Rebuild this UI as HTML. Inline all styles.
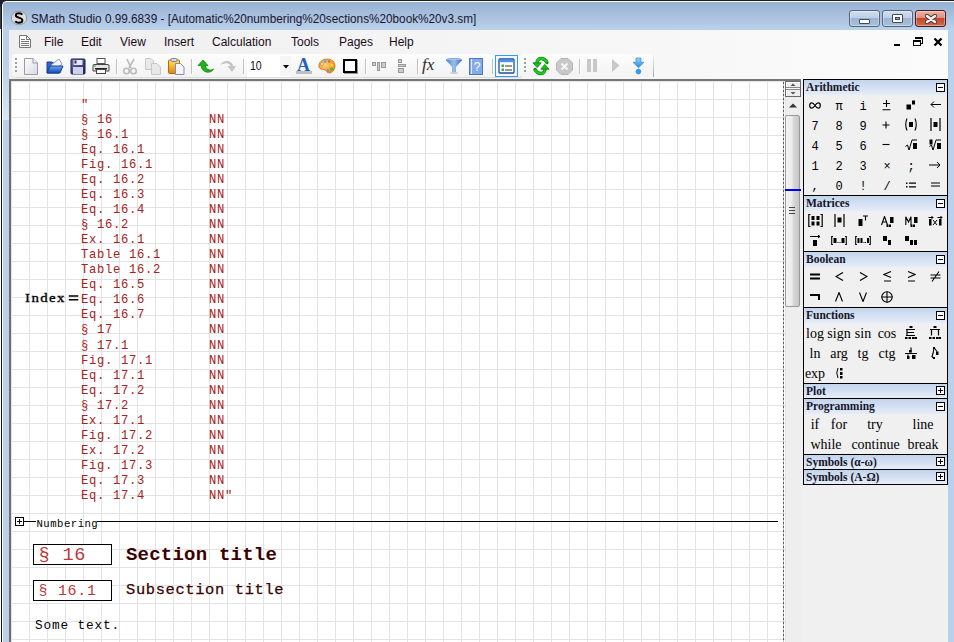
<!DOCTYPE html>
<html><head><meta charset="utf-8">
<style>
*{box-sizing:border-box;margin:0;padding:0}
html,body{width:954px;height:642px;overflow:hidden;background:#fff;position:relative;font-family:"Liberation Sans",sans-serif}
.a{position:absolute}
#desk0{left:0;top:0;width:954px;height:1px;background:#1b1b1b}
#desk1{left:0;top:0;width:1px;height:29px;background:#3b3c62}
#desk2{left:1px;top:0;width:1px;height:642px;background:#111}
#frame{left:2px;top:1px;width:952px;height:641px;background:#b9d1ea;border-top-left-radius:5px;border-top:1px solid #fff;border-left:1px solid #fff}
#title{left:3px;top:2px;width:951px;height:28px;background:linear-gradient(#97b1d3,#bbd2eb);border-top-left-radius:4px}
#ttext{left:31px;top:11.5px;font-size:12.7px;color:#1a1430;white-space:nowrap;transform-origin:0 0;transform:scaleX(0.927)}
#menubar{left:9px;top:30px;width:939px;height:50px;background:linear-gradient(90deg,#efefef,#fbfbfb)}
.cb{top:10px;width:31px;height:17px;border:1px solid #55657d;border-radius:3px;background:linear-gradient(#d0def0 0,#bccfe8 45%,#9db5d3 50%,#a9c0dc 100%);box-shadow:inset 0 0 0 1px rgba(255,255,255,.35)}
#close{border-color:#4a1620;background:linear-gradient(#eab3a5 0,#e0917c 45%,#c5462c 50%,#d2694e 100%)}
.tbar{top:54px;height:23px;border-radius:3px;background:linear-gradient(#fdfdfd,#f3f3f3);box-shadow:1px 1px 0 #dcdcdc}
.grip{top:58px;width:2px;height:14px;background:repeating-linear-gradient(#a0a0a0 0 2px,transparent 2px 4px)}
.tsep{top:59px;width:1px;height:15px;background:#c0c0c0;box-shadow:1px 0 0 #fff}
.menu{top:35px;font-size:12px;color:#1a0a1a;white-space:nowrap}
#ws{left:9px;top:79px;width:776px;height:563px;border-left:2px solid #6f6f6f;border-top:2px solid #777;
 background-color:#fff;
 background-image:linear-gradient(90deg,#e3e3e3 1px,transparent 1px),linear-gradient(#e3e3e3 1px,transparent 1px);
 background-size:18px 18px;background-position:18px 18px}
#wsline{left:9px;top:79px;width:793px;height:2px;background:#777}
#dash{left:783px;top:81px;width:1px;height:561px;background:repeating-linear-gradient(#c4c4c4 0 1px,#5e5e5e 1px 3px,#c4c4c4 3px 4px)}
#sb{left:785px;top:81px;width:17px;height:561px;background:#eeeeee;border-left:1px solid #e3e3e3;border-right:1px solid #e3e3e3;box-shadow:1px 0 0 #fff}
#panelbg{left:801px;top:79px;width:147px;height:563px;background:#f0f0f0}
#panel{left:803px;top:79px;width:145px;height:406px;border:1px solid #000;background:#f0f0f0}
.hd{position:absolute;left:0;width:143px;height:15px;background:linear-gradient(#c3d4ec,#e6edf8);font-family:"Liberation Serif",serif;font-weight:bold;font-size:11.5px;color:#14142a;padding-left:2px;line-height:15.07px}
.tg{position:absolute;right:2px;top:3px;width:9px;height:9px;border:1px solid #000;background:#fff}
.tg.m::before,.tg.p::before{content:"";position:absolute;left:1px;top:3px;width:5px;height:1px;background:#000}
.tg.p::after{content:"";position:absolute;left:3px;top:1px;width:1px;height:5px;background:#000}
.ic{width:24px;height:20px;text-align:center;font-family:"Liberation Mono",monospace;font-size:12px;line-height:25px;color:#000}
.fnt{font-family:"Liberation Serif",serif;font-size:14px;line-height:21px}
.box{left:33px;width:79px;height:21px;border:1.5px solid #000;background:#fff}
.sep{position:absolute;left:0;width:143px;height:1px;background:#000}
.str{font-family:"Liberation Mono",monospace;font-size:12.2px;letter-spacing:0.68px;color:#a82020;white-space:pre;line-height:15.07px}
</style></head><body>
<div class="a" id="desk0"></div><div class="a" id="desk1"></div><div class="a" id="desk2"></div>
<div class="a" style="left:0;top:0;width:7px;height:7px;background:#1e1e30"></div>
<div class="a" id="frame"></div>
<div class="a" id="title"></div>
<div class="a" style="left:3px;top:66px;width:6px;height:54px;background:linear-gradient(#b9d1ea,#d9e6f4)"></div>
<div class="a" id="ttext">SMath Studio 0.99.6839 - [Automatic%20numbering%20sections%20book%20v3.sm]</div>
<div class="a" id="menubar"></div>
<svg class="a" style="left:10px;top:10px" width="18" height="16" viewBox="0 0 18 16"><ellipse cx="9" cy="8" rx="7.6" ry="6.8" fill="#dedede" stroke="#8a8a8a" stroke-width="0.8"/><path d="M12.3 4.6C11.6 3.6 10.4 3.2 9 3.2 7.2 3.2 5.8 4 5.8 5.5 5.8 8 12.4 7.2 12.4 10.2 12.4 11.8 11 12.8 8.8 12.8 7.2 12.8 5.9 12.2 5.3 11.2" fill="none" stroke="#000" stroke-width="1.9"/></svg>
<div class="a cb" style="left:849px"><div class="a" style="left:9px;top:8px;width:11px;height:5px;background:#fff;border:1px solid #3c4a60;border-radius:1px"></div></div>
<div class="a cb" style="left:882px"><div class="a" style="left:9px;top:3px;width:11px;height:9px;background:#fff;border:1px solid #3c4a60;border-radius:1px"><div class="a" style="left:2px;top:2px;width:5px;height:3px;background:#8aa4c8;border:1px solid #3c4a60"></div></div></div>
<div class="a cb" id="close" style="left:915px"><svg class="a" style="left:9px;top:3px" width="12" height="10" viewBox="0 0 12 10"><path d="M2 2L10 8M10 2L2 8" stroke="#4a3030" stroke-width="4.4" stroke-linecap="round"/><path d="M2 2L10 8M10 2L2 8" stroke="#f4f4f4" stroke-width="2.6" stroke-linecap="round"/></svg></div>
<svg class="a" style="left:18px;top:34px" width="14" height="15" viewBox="0 0 14 15"><path d="M1.5 1.5H8.5L12.5 5.5V13.5H1.5Z" fill="#fff" stroke="#777"/><path d="M8.5 1.5V5.5H12.5" fill="none" stroke="#777"/><path d="M3 5.5H7M3 7.5H11M3 9.5H11M3 11.5H11" stroke="#777"/></svg>
<svg class="a" style="left:890px;top:34px" width="56" height="14" viewBox="0 0 56 14" shape-rendering="crispEdges">
<rect x="4" y="9.5" width="6" height="2.5" fill="#000"/>
<path d="M25 3H32V9H30" fill="none" stroke="#000" stroke-width="1"/><rect x="25" y="3" width="7" height="2" fill="#000"/>
<rect x="23.5" y="6.5" width="7" height="5" fill="none" stroke="#000" stroke-width="1"/><rect x="23" y="6" width="8" height="2" fill="#000"/>
</svg>
<svg class="a" style="left:933px;top:37px" width="10" height="10" viewBox="0 0 10 10"><path d="M1.5 1.5L8.5 8.5M8.5 1.5L1.5 8.5" stroke="#000" stroke-width="2.3"/></svg>
<div class="a menu" style="left:44px">File</div>
<div class="a menu" style="left:81px">Edit</div>
<div class="a menu" style="left:120px">View</div>
<div class="a menu" style="left:164px">Insert</div>
<div class="a menu" style="left:212px">Calculation</div>
<div class="a menu" style="left:291px">Tools</div>
<div class="a menu" style="left:339px">Pages</div>
<div class="a menu" style="left:389px">Help</div>

<div class="a tbar" style="left:12px;width:509px"></div>
<div class="a tbar" style="left:521px;width:133px;border-radius:2px 0 0 2px;box-shadow:none"></div>
<div class="a" style="left:653px;top:54px;width:1px;height:23px;background:linear-gradient(#f4f4f4,#a8a8a8)"></div>
<div class="a grip" style="left:15px"></div>
<div class="a grip" style="left:524px"></div>
<div class="a tsep" style="left:116px"></div>
<div class="a tsep" style="left:191px"></div>
<div class="a tsep" style="left:243px"></div>
<div class="a tsep" style="left:365px"></div>
<div class="a tsep" style="left:417px"></div>
<div class="a tsep" style="left:492px"></div>
<div class="a tsep" style="left:579px"></div>
<!-- new -->
<svg class="a" style="left:23px;top:58px" width="16" height="17" viewBox="0 0 16 17"><defs><linearGradient id="gd" x1="0" y1="0" x2="1" y2="1"><stop offset="0" stop-color="#fff"/><stop offset="1" stop-color="#d8d8e4"/></linearGradient></defs><path d="M1.5 0.5H10L14.5 5V16.5H1.5Z" fill="url(#gd)" stroke="#9a9aa8"/><path d="M10 0.5V5H14.5" fill="#eee" stroke="#9a9aa8"/></svg>
<!-- open -->
<svg class="a" style="left:46px;top:58px" width="18" height="17" viewBox="0 0 18 17"><defs><linearGradient id="go" x1="0" y1="0" x2="0" y2="1"><stop offset="0" stop-color="#6aa8f0"/><stop offset="1" stop-color="#1446b8"/></linearGradient></defs><path d="M1 4H6L7 5H13V15H1Z" fill="#2f63c8" stroke="#1a3c90"/><path d="M5 7L13 1L16 6L9 12Z" fill="#f4f4f8" stroke="#7a8aa8" stroke-width=".8"/><path d="M1 15L4 8H17L14 15Z" fill="url(#go)" stroke="#1a3c90"/></svg>
<!-- save -->
<svg class="a" style="left:70px;top:58px" width="16" height="17" viewBox="0 0 16 17"><defs><linearGradient id="gs" x1="0" y1="0" x2="1" y2="1"><stop offset="0" stop-color="#6a72b0"/><stop offset="1" stop-color="#1c2060"/></linearGradient></defs><rect x="1" y="1" width="14" height="15" rx="1" fill="url(#gs)" stroke="#1a1e50"/><rect x="3.5" y="2" width="9" height="5" fill="#e8e8f4"/><rect x="3" y="9" width="10" height="7" fill="#d0d0e8"/><rect x="4.5" y="2.5" width="2" height="3" fill="#2a2f70"/></svg>
<!-- print -->
<svg class="a" style="left:92px;top:57px" width="18" height="18" viewBox="0 0 18 18"><rect x="5" y="1.5" width="8" height="5" fill="#fff" stroke="#555"/><path d="M2 7.5H16Q17 7.5 17 9V14H1V9Q1 7.5 2 7.5Z" fill="#e4e4e4" stroke="#444"/><rect x="3" y="11" width="12" height="1.5" fill="#222"/><rect x="4.5" y="12.5" width="9" height="4" fill="#fff" stroke="#444"/><circle cx="3" cy="9" r=".8" fill="#2a2"/></svg>
<!-- cut -->
<svg class="a" style="left:122px;top:58px" width="16" height="17" viewBox="0 0 16 17"><path d="M7 10L12 1M9 10L5 1" stroke="#bbb" stroke-width="1.6"/><circle cx="4.5" cy="13" r="2.8" fill="none" stroke="#bbb" stroke-width="1.6"/><circle cx="11.5" cy="13" r="2.8" fill="none" stroke="#bbb" stroke-width="1.6"/></svg>
<!-- copy -->
<svg class="a" style="left:145px;top:58px" width="17" height="17" viewBox="0 0 17 17"><path d="M0.5 0.5H6L8.5 3V11.5H0.5Z" fill="#e8e8e8" stroke="#c8c8c8"/><path d="M6.5 5.5H12L15.5 9V16.5H6.5Z" fill="#e8e8e8" stroke="#c8c8c8"/></svg>
<!-- paste -->
<svg class="a" style="left:168px;top:58px" width="17" height="17" viewBox="0 0 17 17"><defs><linearGradient id="gp" x1="0" y1="0" x2="0" y2="1"><stop offset="0" stop-color="#ffe65a"/><stop offset="1" stop-color="#e8800a"/></linearGradient></defs><rect x="0.5" y="2" width="11" height="13.5" rx="1" fill="url(#gp)" stroke="#b06a10"/><rect x="3" y="0.5" width="6" height="3" rx="1.2" fill="#dde" stroke="#7a7a90"/><path d="M7.5 5.5H12.5L16 9V16.5H7.5Z" fill="#f4f4fa" stroke="#8a8ab0"/></svg>
<!-- undo -->
<svg class="a" style="left:197px;top:59px" width="17" height="14" viewBox="0 0 17 14"><path d="M6 1L1 6.5H4.2C4.2 11 8 13.5 11.5 13.2 14 13 15.8 11.6 16.5 10 14.5 11.4 9.5 12 8.2 6.5H11Z" fill="#18b818" stroke="#0a7a0a" stroke-width=".7"/></svg>
<!-- redo -->
<svg class="a" style="left:220px;top:59px" width="17" height="14" viewBox="0 0 17 14"><path d="M0.5 6C2 2.5 5 1.5 8 2 11 2.5 12.5 4.5 13.2 7H16L12 13L7.5 7H10.5C9.8 5 8 4.2 6 4.3 4 4.4 2 5.2 0.5 6Z" fill="#c4c4c4"/></svg>
<!-- combo -->
<div class="a" style="left:247px;top:55px;width:44px;height:22px;background:#fff"></div>
<div class="a" style="left:280px;top:56px;width:11px;height:20px;background:#f6f6f6"></div>
<div class="a" style="left:250px;top:59px;font-size:12px;color:#1a0a1a;transform:scaleX(0.88);transform-origin:0 0">10</div>
<svg class="a" style="left:283px;top:65px" width="6" height="4" viewBox="0 0 6 4"><path d="M0 0H6L3 3.5Z" fill="#000"/></svg>
<!-- font A -->
<div class="a" style="left:296px;top:71px;width:16px;height:3px;background:#c0c0c0"></div>
<div class="a" style="left:297px;top:55px;font-family:'Liberation Serif',serif;font-weight:bold;font-size:18px;color:#1f62bf">A</div>
<!-- palette -->
<svg class="a" style="left:318px;top:58px" width="18" height="16" viewBox="0 0 18 16"><defs><radialGradient id="gpl" cx=".4" cy=".4" r=".7"><stop offset="0" stop-color="#ffd27a"/><stop offset="1" stop-color="#e88a10"/></radialGradient></defs><path d="M9 1C14 1 17 4 17 8 17 12 14 15 11 15 9 15 9 13 7 12 5 11 2 12 1 9 0 5 4 1 9 1Z" fill="url(#gpl)" stroke="#c06a08" stroke-width=".7"/><circle cx="4" cy="6" r="1.4" fill="#fff" stroke="#a05a08" stroke-width=".5"/><circle cx="7" cy="3.5" r="1.3" fill="#4aa8f8"/><circle cx="11" cy="3.5" r="1.2" fill="#f06030"/><circle cx="14" cy="7" r="1.2" fill="#f8e020"/><circle cx="13.5" cy="11" r="1.5" fill="#30c030"/><circle cx="10" cy="12.5" r="1.3" fill="#b070e0"/></svg>
<!-- border box -->
<div class="a" style="left:343px;top:59px;width:14px;height:14px;border:2px solid #000;background:#fff;box-shadow:1px 1px 0 #999"></div>
<!-- align h -->
<svg class="a" style="left:371px;top:61px" width="16" height="10" viewBox="0 0 16 10"><rect x="1.5" y="1.5" width="3" height="3" fill="#ccc" stroke="#999"/><rect x="6.5" y="1.5" width="2" height="8" fill="#ccc" stroke="#999"/><rect x="10.5" y="1.5" width="4" height="5" fill="#ccc" stroke="#999"/></svg>
<!-- align v -->
<svg class="a" style="left:397px;top:58px" width="10" height="16" viewBox="0 0 10 16"><rect x="1.5" y="1.5" width="3" height="3" fill="#ccc" stroke="#999"/><rect x="1.5" y="6.5" width="7" height="2" fill="#ccc" stroke="#999"/><rect x="1.5" y="10.5" width="5" height="4" fill="#ccc" stroke="#999"/></svg>
<!-- fx -->
<div class="a" style="left:422px;top:55px;font-family:'Liberation Serif',serif;font-style:italic;font-size:17px;color:#2a2a2a">fx</div>
<!-- funnel -->
<svg class="a" style="left:445px;top:58px" width="18" height="16" viewBox="0 0 18 16"><defs><linearGradient id="gf" x1="0" y1="0" x2="1" y2="0"><stop offset="0" stop-color="#4a7ec8"/><stop offset=".5" stop-color="#9cc0ec"/><stop offset="1" stop-color="#3a6cb8"/></linearGradient></defs><ellipse cx="9" cy="2" rx="8" ry="1.6" fill="#a8c8f0" stroke="#4a78b8" stroke-width=".6"/><path d="M1 2L7 9V14.5H11V9L17 2Z" fill="url(#gf)"/><ellipse cx="9" cy="15" rx="4" ry="1" fill="#ccc"/></svg>
<!-- help book -->
<svg class="a" style="left:469px;top:58px" width="15" height="17" viewBox="0 0 15 17"><rect x="0.5" y="0.5" width="13" height="16" fill="#86ace8" stroke="#4a78c4"/><path d="M2.5 1V16" stroke="#e0ecfa"/><text x="8" y="12.5" font-family="Liberation Sans" font-size="12" fill="#fff" text-anchor="middle">?</text></svg>
<!-- highlighted -->
<div class="a" style="left:495px;top:55px;width:23px;height:22px;border:1px solid #3399ff;background:#f4f6f8"></div>
<svg class="a" style="left:498px;top:58px" width="17" height="16" viewBox="0 0 17 16"><rect x="1" y="1" width="15" height="14" rx="1" fill="#fff" stroke="#1d4fa0" stroke-width="1.3"/><rect x="1.6" y="1.6" width="13.8" height="2.6" fill="#4a92ea"/><rect x="3.5" y="6.5" width="2.5" height="2.5" fill="#3ab03a"/><rect x="3.5" y="10.5" width="2.5" height="2.5" fill="#3ab03a"/><path d="M7 8H14M7 12H14" stroke="#333" stroke-width="1.2"/></svg>
<!-- refresh -->
<svg class="a" style="left:528px;top:54px" width="24" height="24" viewBox="0 0 24 24"><defs><linearGradient id="gr" x1="0" y1="0" x2="0" y2="1"><stop offset="0" stop-color="#5cf05c"/><stop offset="1" stop-color="#08a008"/></linearGradient></defs>
<path d="M19 8.5C17.5 5.5 15.5 4.5 13 4.5 10.5 4.5 9 6.5 9 9" fill="none" stroke="#0a8a0a" stroke-width="3.4" stroke-linecap="round"/>
<path d="M19 8.5C17.5 5.5 15.5 4.5 13 4.5 10.5 4.5 9 6.5 9 9" fill="none" stroke="#22d022" stroke-width="2"/>
<path d="M5 8.8H13.2L9.2 13.6Z" fill="#18c018" stroke="#0a7a0a" stroke-width=".8" stroke-linejoin="round"/>
<path d="M7 15.5C8.5 18.5 10.5 19.5 13 19.5 15.5 19.5 17 17.5 17 15" fill="none" stroke="#0a8a0a" stroke-width="3.4" stroke-linecap="round"/>
<path d="M7 15.5C8.5 18.5 10.5 19.5 13 19.5 15.5 19.5 17 17.5 17 15" fill="none" stroke="#22c822" stroke-width="2"/>
<path d="M12.8 15.2H21L16.8 10.4Z" fill="#18c018" stroke="#0a7a0a" stroke-width=".8" stroke-linejoin="round"/>
</svg>
<!-- stop -->
<svg class="a" style="left:556px;top:58px" width="17" height="17" viewBox="0 0 17 17"><path d="M5 0.5H12L16.5 5V12L12 16.5H5L0.5 12V5Z" fill="#c8c8c8" stroke="#b4b4b4"/><path d="M5.5 5.5L11.5 11.5M11.5 5.5L5.5 11.5" stroke="#f4f4f4" stroke-width="2.2"/></svg>
<!-- pause -->
<svg class="a" style="left:586px;top:58px" width="13" height="15" viewBox="0 0 13 15"><rect x="1" y="1" width="4" height="13" fill="#c8c8c8"/><rect x="7" y="1" width="4" height="13" fill="#c8c8c8"/></svg>
<!-- play -->
<svg class="a" style="left:611px;top:58px" width="10" height="15" viewBox="0 0 10 15"><path d="M1 1L8.5 7.5L1 14Z" fill="#c8c8c8"/></svg>
<!-- step -->
<svg class="a" style="left:632px;top:57px" width="13" height="18" viewBox="0 0 13 18"><defs><linearGradient id="gst" x1="0" y1="0" x2="0" y2="1"><stop offset="0" stop-color="#9ad0f8"/><stop offset="1" stop-color="#2a8ae0"/></linearGradient></defs><path d="M4 1H9V5.3H12L6.5 10.7 1 5.3H4Z" fill="url(#gst)" stroke="#3a8ad8" stroke-width=".7"/><circle cx="6.4" cy="14.6" r="2.4" fill="#28a0f0" stroke="#1a78d0" stroke-width=".6"/></svg>
<div class="a" id="ws"></div>
<div class="a" id="wsline"></div>
<div class="a" id="dash"></div>
<div class="a" id="sb"></div>
<div class="a" id="panelbg"></div>
<div class="a" id="panel">
 <div class="hd" style="top:0">Arithmetic<i class="tg m"></i></div>
 <div class="sep" style="top:115px"></div>
 <div class="hd" style="top:116px">Matrices<i class="tg m"></i></div>
 <div class="sep" style="top:171px"></div>
 <div class="hd" style="top:172px">Boolean<i class="tg m"></i></div>
 <div class="sep" style="top:227px"></div>
 <div class="hd" style="top:228px">Functions<i class="tg m"></i></div>
 <div class="sep" style="top:303px"></div>
 <div class="hd" style="top:304px;height:14px;line-height:14px">Plot<i class="tg p" style="top:2px"></i></div>
 <div class="sep" style="top:318px"></div>
 <div class="hd" style="top:319px">Programming<i class="tg m"></i></div>
 <div class="sep" style="top:374px"></div>
 <div class="hd" style="top:375px;height:14px;line-height:14px">Symbols (α-ω)<i class="tg p" style="top:2px"></i></div>
 <div class="sep" style="top:389px"></div>
 <div class="hd" style="top:390px;height:14px;line-height:14px">Symbols (A-Ω)<i class="tg p" style="top:2px"></i></div>
</div>

<div class="a ic" style="left:803px;top:95px"><svg width="12" height="7" viewBox="0 0 12 7" style="display:block;margin:7px auto 0"><path d="M6 3.5C4.5 1.2 3.5 0.8 2.7 0.8 1.4 0.8 0.7 2 0.7 3.5 0.7 5 1.4 6.2 2.7 6.2 3.5 6.2 4.5 5.8 6 3.5 7.5 1.2 8.5 0.8 9.3 0.8 10.6 0.8 11.3 2 11.3 3.5 11.3 5 10.6 6.2 9.3 6.2 8.5 6.2 7.5 5.8 6 3.5Z" fill="none" stroke="#000" stroke-width="1.2"/></svg></div>
<div class="a ic" style="left:827px;top:95px">π</div>
<div class="a ic" style="left:851px;top:95px">i</div>
<div class="a ic" style="left:875px;top:95px"><svg width="9" height="11" viewBox="0 0 9 11" style="display:block;margin:5px auto 0 7px"><path d="M4.5 0V7M1 3.5H8M0.5 9.8H8.5" stroke="#000" stroke-width="1.1"/></svg></div>
<div class="a ic" style="left:899px;top:95px"><svg width="10" height="10" viewBox="0 0 10 10" style="display:block;margin:5px auto 0"><rect x="0.5" y="4.5" width="4.5" height="5" fill="#000"/><rect x="6" y="0.5" width="3" height="4" fill="#000"/></svg></div>
<div class="a ic" style="left:923px;top:95px"><svg width="11" height="7" viewBox="0 0 11 7" style="display:block;margin:6px auto 0"><path d="M1 3.5H11M4 0.5L1 3.5 4 6.5" fill="none" stroke="#000" stroke-width="1"/></svg></div>
<div class="a ic" style="left:803px;top:115px">7</div>
<div class="a ic" style="left:827px;top:115px">8</div>
<div class="a ic" style="left:851px;top:115px">9</div>
<div class="a ic" style="left:875px;top:115px"><svg width="8" height="8" viewBox="0 0 8 8" style="display:block;margin:6px 0 0 7px"><path d="M4 0.5V7.5M0.5 4H7.5" stroke="#000" stroke-width="1.1"/></svg></div>
<div class="a ic" style="left:899px;top:115px"><svg width="14" height="13" viewBox="0 0 14 13" style="display:block;margin:3px auto 0"><path d="M3 0.5Q0.5 6.5 3 12.5M11 0.5Q13.5 6.5 11 12.5" fill="none" stroke="#000" stroke-width="1.1"/><rect x="5" y="4" width="4" height="5" fill="#000"/></svg></div>
<div class="a ic" style="left:923px;top:115px"><svg width="11" height="13" viewBox="0 0 11 13" style="display:block;margin:3px auto 0"><path d="M1 0V13M10 0V13" stroke="#000" stroke-width="1.2"/><rect x="3.5" y="4" width="4" height="5" fill="#000"/></svg></div>
<div class="a ic" style="left:803px;top:135px">4</div>
<div class="a ic" style="left:827px;top:135px">5</div>
<div class="a ic" style="left:851px;top:135px">6</div>
<div class="a ic" style="left:875px;top:135px"><svg width="8" height="8" viewBox="0 0 8 8" style="display:block;margin:5px 0 0 7px"><path d="M0.5 4.5H7.5" stroke="#000" stroke-width="1.1"/></svg></div>
<div class="a ic" style="left:899px;top:135px"><svg width="13" height="12" viewBox="0 0 13 12" style="display:block;margin:4px auto 0"><path d="M0.5 7.5L2.5 6 4 11 7 1H12" fill="none" stroke="#000" stroke-width="1"/><rect x="8" y="4" width="4" height="6" fill="#000"/></svg></div>
<div class="a ic" style="left:923px;top:135px"><svg width="13" height="12" viewBox="0 0 13 12" style="display:block;margin:4px auto 0"><rect x="0.5" y="0.5" width="3" height="5" fill="#000"/><path d="M0.5 7.5L2.5 6 4 11 7 1H12" fill="none" stroke="#000" stroke-width="1"/><rect x="8" y="4" width="4" height="6" fill="#000"/></svg></div>
<div class="a ic" style="left:803px;top:155px">1</div>
<div class="a ic" style="left:827px;top:155px">2</div>
<div class="a ic" style="left:851px;top:155px">3</div>
<div class="a ic" style="left:875px;top:155px"><span style="font-size:12px">×</span></div>
<div class="a ic" style="left:899px;top:155px">;</div>
<div class="a ic" style="left:923px;top:155px"><svg width="12" height="8" viewBox="0 0 12 8" style="display:block;margin:6px auto 0"><path d="M0 4H11M8 1L11 4 8 7" fill="none" stroke="#000" stroke-width="1"/></svg></div>
<div class="a ic" style="left:803px;top:175px">,</div>
<div class="a ic" style="left:827px;top:175px">0</div>
<div class="a ic" style="left:851px;top:175px">!</div>
<div class="a ic" style="left:875px;top:175px">/</div>
<div class="a ic" style="left:899px;top:175px"><svg width="10" height="6" viewBox="0 0 10 6" style="display:block;margin:7px auto 0"><rect x="0" y="0.5" width="1.5" height="1.5" fill="#000"/><rect x="0" y="4" width="1.5" height="1.5" fill="#000"/><path d="M3 1.2H10M3 4.8H10" stroke="#000" stroke-width="1.2"/></svg></div>
<div class="a ic" style="left:923px;top:175px"><svg width="9" height="5" viewBox="0 0 9 5" style="display:block;margin:7px auto 0"><path d="M0 1H9M0 4H9" stroke="#000" stroke-width="1.2"/></svg></div>
<div class="a ic" style="left:803px;top:211px"><svg width="15" height="13" viewBox="0 0 15 13" style="display:block;margin:3px auto 0"><path d="M2.5 0.5H0.8V12.5H2.5M12.5 0.5H14.2V12.5H12.5" fill="none" stroke="#000" stroke-width="1.2"/><rect x="3.5" y="2" width="3" height="4" fill="#000"/><rect x="8.5" y="2" width="3" height="4" fill="#000"/><rect x="3.5" y="7.5" width="3" height="4" fill="#000"/><rect x="8.5" y="7.5" width="3" height="4" fill="#000"/></svg></div>
<div class="a ic" style="left:827px;top:211px"><svg width="11" height="13" viewBox="0 0 11 13" style="display:block;margin:3px auto 0"><path d="M1 0V13M10 0V13" stroke="#000" stroke-width="1.2"/><rect x="3.5" y="3.5" width="4" height="5" fill="#000"/></svg></div>
<div class="a ic" style="left:851px;top:211px"><svg width="10" height="11" viewBox="0 0 10 11" style="display:block;margin:4px auto 0"><rect x="0.5" y="4" width="4" height="7" fill="#000"/><path d="M5 1H10M7.5 1V5.5" stroke="#000" stroke-width="1.1"/></svg></div>
<div class="a ic" style="left:875px;top:211px"><svg width="13" height="11" viewBox="0 0 13 11" style="display:block;margin:5px auto 0"><path d="M0.5 9L3.5 0.5 6.5 9M1.5 6H5.5" fill="none" stroke="#000" stroke-width="1.1"/><rect x="5.5" y="8.5" width="2" height="2.5" fill="#000"/><rect x="8" y="8.5" width="2" height="2.5" fill="#000"/><rect x="9" y="1" width="3.5" height="6" fill="#000"/></svg></div>
<div class="a ic" style="left:899px;top:211px"><svg width="13" height="11" viewBox="0 0 13 11" style="display:block;margin:5px auto 0"><path d="M0.8 9V0.8L3.5 6 6 0.8V9" fill="none" stroke="#000" stroke-width="1.1"/><rect x="5.5" y="8.5" width="2" height="2.5" fill="#000"/><rect x="8" y="8.5" width="2" height="2.5" fill="#000"/><rect x="9" y="1" width="3.5" height="6" fill="#000"/></svg></div>
<div class="a ic" style="left:923px;top:211px"><svg width="15" height="10" viewBox="0 0 15 10" style="display:block;margin:5px auto 0"><path d="M0.5 1.5H5M3.5 0L5 1.5 3.5 3M9.5 1.5H14M12.5 0L14 1.5 12.5 3" fill="none" stroke="#000" stroke-width="1"/><rect x="1" y="3" width="2.5" height="6.5" fill="#000"/><rect x="11" y="3" width="2.5" height="6.5" fill="#000"/><path d="M5 4L9 9M9 4L5 9" stroke="#000" stroke-width="1"/></svg></div>
<div class="a ic" style="left:803px;top:231px"><svg width="11" height="11" viewBox="0 0 11 11" style="display:block;margin:4px auto 0"><path d="M0 1.5H10M8 0L10 1.5 8 3" fill="none" stroke="#000" stroke-width="1"/><rect x="3" y="5" width="4" height="6" fill="#000"/></svg></div>
<div class="a ic" style="left:827px;top:231px"><svg width="16" height="9" viewBox="0 0 16 9" style="display:block;margin:5px auto 0"><path d="M2 0.5H0.7V8.5H2M14 0.5H15.3V8.5H14" fill="none" stroke="#000" stroke-width="1.1"/><rect x="2.5" y="2" width="3" height="5" fill="#000"/><rect x="6.5" y="6" width="1" height="1" fill="#000"/><rect x="8.5" y="6" width="1" height="1" fill="#000"/><rect x="10.5" y="2" width="3" height="5" fill="#000"/></svg></div>
<div class="a ic" style="left:851px;top:231px"><svg width="16" height="9" viewBox="0 0 16 9" style="display:block;margin:5px auto 0"><path d="M2 0.5H0.7V8.5H2M14 0.5H15.3V8.5H14" fill="none" stroke="#000" stroke-width="1.1"/><rect x="2.5" y="2" width="2" height="5" fill="#000"/><rect x="5.5" y="2" width="2" height="5" fill="#000"/><rect x="8.5" y="6" width="1" height="1" fill="#000"/><rect x="10" y="6" width="1" height="1" fill="#000"/><rect x="12" y="2" width="2" height="5" fill="#000"/></svg></div>
<div class="a ic" style="left:875px;top:231px"><svg width="9" height="9" viewBox="0 0 9 9" style="display:block;margin:5px auto 0"><rect x="0" y="0" width="4" height="5" fill="#000"/><rect x="5" y="4" width="3" height="5" fill="#000"/></svg></div>
<div class="a ic" style="left:899px;top:231px"><svg width="13" height="9" viewBox="0 0 13 9" style="display:block;margin:5px auto 0"><rect x="0" y="0" width="4" height="5" fill="#000"/><rect x="5" y="4" width="3" height="5" fill="#000"/><rect x="9" y="4" width="3" height="5" fill="#000"/></svg></div>
<div class="a ic" style="left:803px;top:267px"><svg width="10" height="7" viewBox="0 0 10 7" style="display:block;margin:6px auto 0"><path d="M0 1.5H10M0 5.5H10" stroke="#000" stroke-width="2"/></svg></div>
<div class="a ic" style="left:827px;top:267px"><svg width="9" height="9" viewBox="0 0 9 9" style="display:block;margin:5px auto 0"><path d="M8 0.5L1 4.5 8 8.5" fill="none" stroke="#000" stroke-width="1.2"/></svg></div>
<div class="a ic" style="left:851px;top:267px"><svg width="9" height="9" viewBox="0 0 9 9" style="display:block;margin:5px auto 0"><path d="M1 0.5L8 4.5 1 8.5" fill="none" stroke="#000" stroke-width="1.2"/></svg></div>
<div class="a ic" style="left:875px;top:267px"><svg width="9" height="11" viewBox="0 0 9 11" style="display:block;margin:4px auto 0"><path d="M8 0.5L1 3.5 8 6.5M1 10H8" fill="none" stroke="#000" stroke-width="1.1"/></svg></div>
<div class="a ic" style="left:899px;top:267px"><svg width="9" height="11" viewBox="0 0 9 11" style="display:block;margin:4px auto 0"><path d="M1 0.5L8 3.5 1 6.5M1 10H8" fill="none" stroke="#000" stroke-width="1.1"/></svg></div>
<div class="a ic" style="left:923px;top:267px"><svg width="11" height="11" viewBox="0 0 11 11" style="display:block;margin:4px auto 0"><path d="M0.5 4H10.5M0.5 7H10.5M9 0.5L2 10.5" fill="none" stroke="#000" stroke-width="1.1"/></svg></div>
<div class="a ic" style="left:803px;top:287px"><svg width="10" height="6" viewBox="0 0 10 6" style="display:block;margin:7px auto 0"><path d="M0 1H9V6" fill="none" stroke="#000" stroke-width="2"/></svg></div>
<div class="a ic" style="left:827px;top:287px"><svg width="8" height="10" viewBox="0 0 8 10" style="display:block;margin:5px auto 0"><path d="M0.5 9.5L4 0.5 7.5 9.5" fill="none" stroke="#000" stroke-width="1.1"/></svg></div>
<div class="a ic" style="left:851px;top:287px"><svg width="8" height="10" viewBox="0 0 8 10" style="display:block;margin:5px auto 0"><path d="M0.5 0.5L4 9.5 7.5 0.5" fill="none" stroke="#000" stroke-width="1.1"/></svg></div>
<div class="a ic" style="left:875px;top:287px"><svg width="12" height="12" viewBox="0 0 12 12" style="display:block;margin:4px auto 0"><circle cx="6" cy="6" r="5.2" fill="none" stroke="#000" stroke-width="1.1"/><path d="M0.5 6H11.5M6 0.5V11.5" stroke="#000" stroke-width="1.1"/></svg></div>
<div class="a ic fnt" style="left:803px;top:323px">log</div>
<div class="a ic fnt" style="left:827px;top:323px">sign</div>
<div class="a ic fnt" style="left:851px;top:323px">sin</div>
<div class="a ic fnt" style="left:875px;top:323px">cos</div>
<div class="a ic fnt" style="left:803px;top:343px">ln</div>
<div class="a ic fnt" style="left:827px;top:343px">arg</div>
<div class="a ic fnt" style="left:851px;top:343px">tg</div>
<div class="a ic fnt" style="left:875px;top:343px">ctg</div>
<div class="a ic fnt" style="left:803px;top:363px">exp</div>
<div class="a ic" style="left:827px;top:363px"><svg width="9" height="12" viewBox="0 0 9 12" style="display:block;margin:4px auto 0"><path d="M3 1Q0.5 6 3 11" fill="none" stroke="#000" stroke-width="1"/><rect x="5" y="1" width="2.5" height="2.5" fill="#000"/><rect x="5" y="5" width="2.5" height="3" fill="#000"/><rect x="5" y="9" width="2.5" height="2.5" fill="#000"/></svg></div>
<div class="a ic" style="left:899px;top:323px"><svg width="12" height="13" viewBox="0 0 12 13" style="display:block;margin:3px auto 0"><rect x="4.5" y="0" width="3" height="2" fill="#000"/><path d="M1 3.5H10M1 9.5H10M2 4V9M1.5 6.5H9" fill="none" stroke="#000" stroke-width="1.2"/><rect x="0" y="11" width="2.5" height="2" fill="#000"/><rect x="3.5" y="11" width="2.5" height="2" fill="#000"/><rect x="7" y="11" width="2.5" height="2" fill="#000"/><rect x="9.5" y="11" width="2.5" height="2" fill="#000"/></svg></div>
<div class="a ic" style="left:923px;top:323px"><svg width="12" height="13" viewBox="0 0 12 13" style="display:block;margin:3px auto 0"><rect x="4.5" y="0" width="3" height="2" fill="#000"/><path d="M1 3.5H11M2.5 3.5V9.5M9.5 3.5V9.5" fill="none" stroke="#000" stroke-width="1.2"/><rect x="0" y="11" width="2.5" height="2" fill="#000"/><rect x="3.5" y="11" width="2.5" height="2" fill="#000"/><rect x="7" y="11" width="2.5" height="2" fill="#000"/><rect x="9.5" y="11" width="2.5" height="2" fill="#000"/></svg></div>
<div class="a ic" style="left:899px;top:343px"><svg width="12" height="12" viewBox="0 0 12 12" style="display:block;margin:4px auto 0"><path d="M6 0.5V5.5M0 6.5H12M3 7.5V11.5" stroke="#000" stroke-width="1.2"/><rect x="4" y="3" width="2.5" height="2.5" fill="#000"/><rect x="2" y="9" width="2.5" height="3" fill="#000"/><rect x="7" y="8" width="3.5" height="4" fill="#000"/></svg></div>
<div class="a ic" style="left:923px;top:343px"><svg width="8" height="12" viewBox="0 0 8 12" style="display:block;margin:4px auto 0"><path d="M3 0.5L6 4.5M3 0.5Q2.5 6 1 9.5 3 11.5 3 11.5" fill="none" stroke="#000" stroke-width="1.1"/><rect x="2" y="0" width="2" height="2" fill="#000"/><rect x="5" y="4.5" width="2.5" height="3.5" fill="#000"/><rect x="2" y="10" width="2" height="2" fill="#000"/></svg></div>
<div class="a ic fnt" style="left:795px;top:414px;width:40px">if</div>
<div class="a ic fnt" style="left:819px;top:414px;width:40px">for</div>
<div class="a ic fnt" style="left:855px;top:414px;width:40px">try</div>
<div class="a ic fnt" style="left:903px;top:414px;width:40px">line</div>
<div class="a ic fnt" style="left:801px;top:434px;width:50px">while</div>
<div class="a ic fnt" style="left:850.5px;top:434px;width:50px">continue</div>
<div class="a ic fnt" style="left:898px;top:434px;width:50px">break</div>

<div class="a" style="left:25px;top:289.5px;font-family:'Liberation Serif',serif;font-size:13.5px;letter-spacing:1.3px;color:#000;-webkit-text-stroke:0.3px #000;transform:scaleX(1.1);transform-origin:0 0;white-space:nowrap">Index</div>
<svg class="a" style="left:68px;top:293px" width="12" height="10" viewBox="0 0 12 10"><path d="M0.8 3H10.3M0.8 6.7H10.3" stroke="#000" stroke-width="1.4"/></svg>
<!-- region Numbering -->
<div class="a" style="left:15px;top:517px;width:9px;height:9px;border:1px solid #000;background:#fff"></div>
<div class="a" style="left:17px;top:521px;width:5px;height:1px;background:#000"></div>
<div class="a" style="left:19px;top:519px;width:1px;height:5px;background:#000"></div>
<div class="a" style="left:24px;top:521px;width:12px;height:1px;background:#000"></div>
<div class="a" style="left:97px;top:521px;width:681px;height:1px;background:#000"></div>
<div class="a" style="left:36.5px;top:517.5px;font-family:'Liberation Mono',monospace;font-size:10.6px;letter-spacing:0.5px;color:#000;white-space:pre">Numbering</div>
<div class="a box" style="top:544px"></div>
<div class="a box" style="top:580px"></div>
<div class="a" style="left:38.5px;top:544.5px;font-family:'Liberation Mono',monospace;font-size:18.6px;letter-spacing:0.8px;color:#b83a3a;white-space:pre">§ 16</div>
<div class="a" style="left:38.5px;top:582.5px;font-family:'Liberation Mono',monospace;font-size:15px;letter-spacing:0.7px;color:#b83a3a;white-space:pre">§ 16.1</div>
<div class="a" style="left:126px;top:544px;font-family:'Liberation Mono',monospace;font-weight:bold;font-size:19px;letter-spacing:0.22px;color:#3a0000;white-space:pre">Section title</div>
<div class="a" style="left:126px;top:580.5px;font-family:'Liberation Mono',monospace;font-size:15.4px;letter-spacing:0.65px;color:#3a0000;-webkit-text-stroke:0.25px #3a0000;white-space:pre">Subsection title</div>
<div class="a" style="left:35px;top:618px;font-family:'Liberation Mono',monospace;font-size:12.8px;letter-spacing:0.82px;color:#000;white-space:pre">Some text.</div>
<!-- scrollbar parts -->
<div class="a" style="left:785px;top:81px;width:16px;height:16px;border:1px solid #6a6a6a;background:#eee;box-shadow:inset 1px 1px 0 #fff"></div>
<div class="a" style="left:786px;top:87px;width:14px;height:3px;border-top:1px solid #888;border-bottom:1px solid #888;background:#f8f8f8"></div>
<svg class="a" style="left:790px;top:83px" width="6" height="12" viewBox="0 0 6 12"><path d="M0.5 3L3 0.5 5.5 3Z" fill="#555"/><path d="M0.5 9L3 11.5 5.5 9Z" fill="#555"/></svg>
<svg class="a" style="left:789px;top:103px" width="8" height="5" viewBox="0 0 8 5"><path d="M0 4.5L4 0.5 8 4.5Z" fill="#333"/></svg>
<div class="a" style="left:785px;top:115px;width:15px;height:192px;border:1px solid #9a9a9a;border-radius:2px;background:linear-gradient(90deg,#f4f4f4 0,#ebebeb 48%,#dadada 52%,#c6c6c6 100%)"></div>
<div class="a" style="left:789px;top:207px;width:6px;height:1px;background:#444;box-shadow:0 3px 0 #444,0 6px 0 #444"></div>
<div class="a" style="left:785px;top:189px;width:16px;height:1.5px;background:#0000e6"></div>
<div class="a str" style="left:81px;top:97.5px">"
§ 16            NN
§ 16.1          NN
Eq. 16.1        NN
Fig. 16.1       NN
Eq. 16.2        NN
Eq. 16.3        NN
Eq. 16.4        NN
§ 16.2          NN
Ex. 16.1        NN
Table 16.1      NN
Table 16.2      NN
Eq. 16.5        NN
Eq. 16.6        NN
Eq. 16.7        NN
§ 17            NN
§ 17.1          NN
Fig. 17.1       NN
Eq. 17.1        NN
Eq. 17.2        NN
§ 17.2          NN
Ex. 17.1        NN
Fig. 17.2       NN
Ex. 17.2        NN
Fig. 17.3       NN
Eq. 17.3        NN
Eq. 17.4        NN"</div>
</body></html>
